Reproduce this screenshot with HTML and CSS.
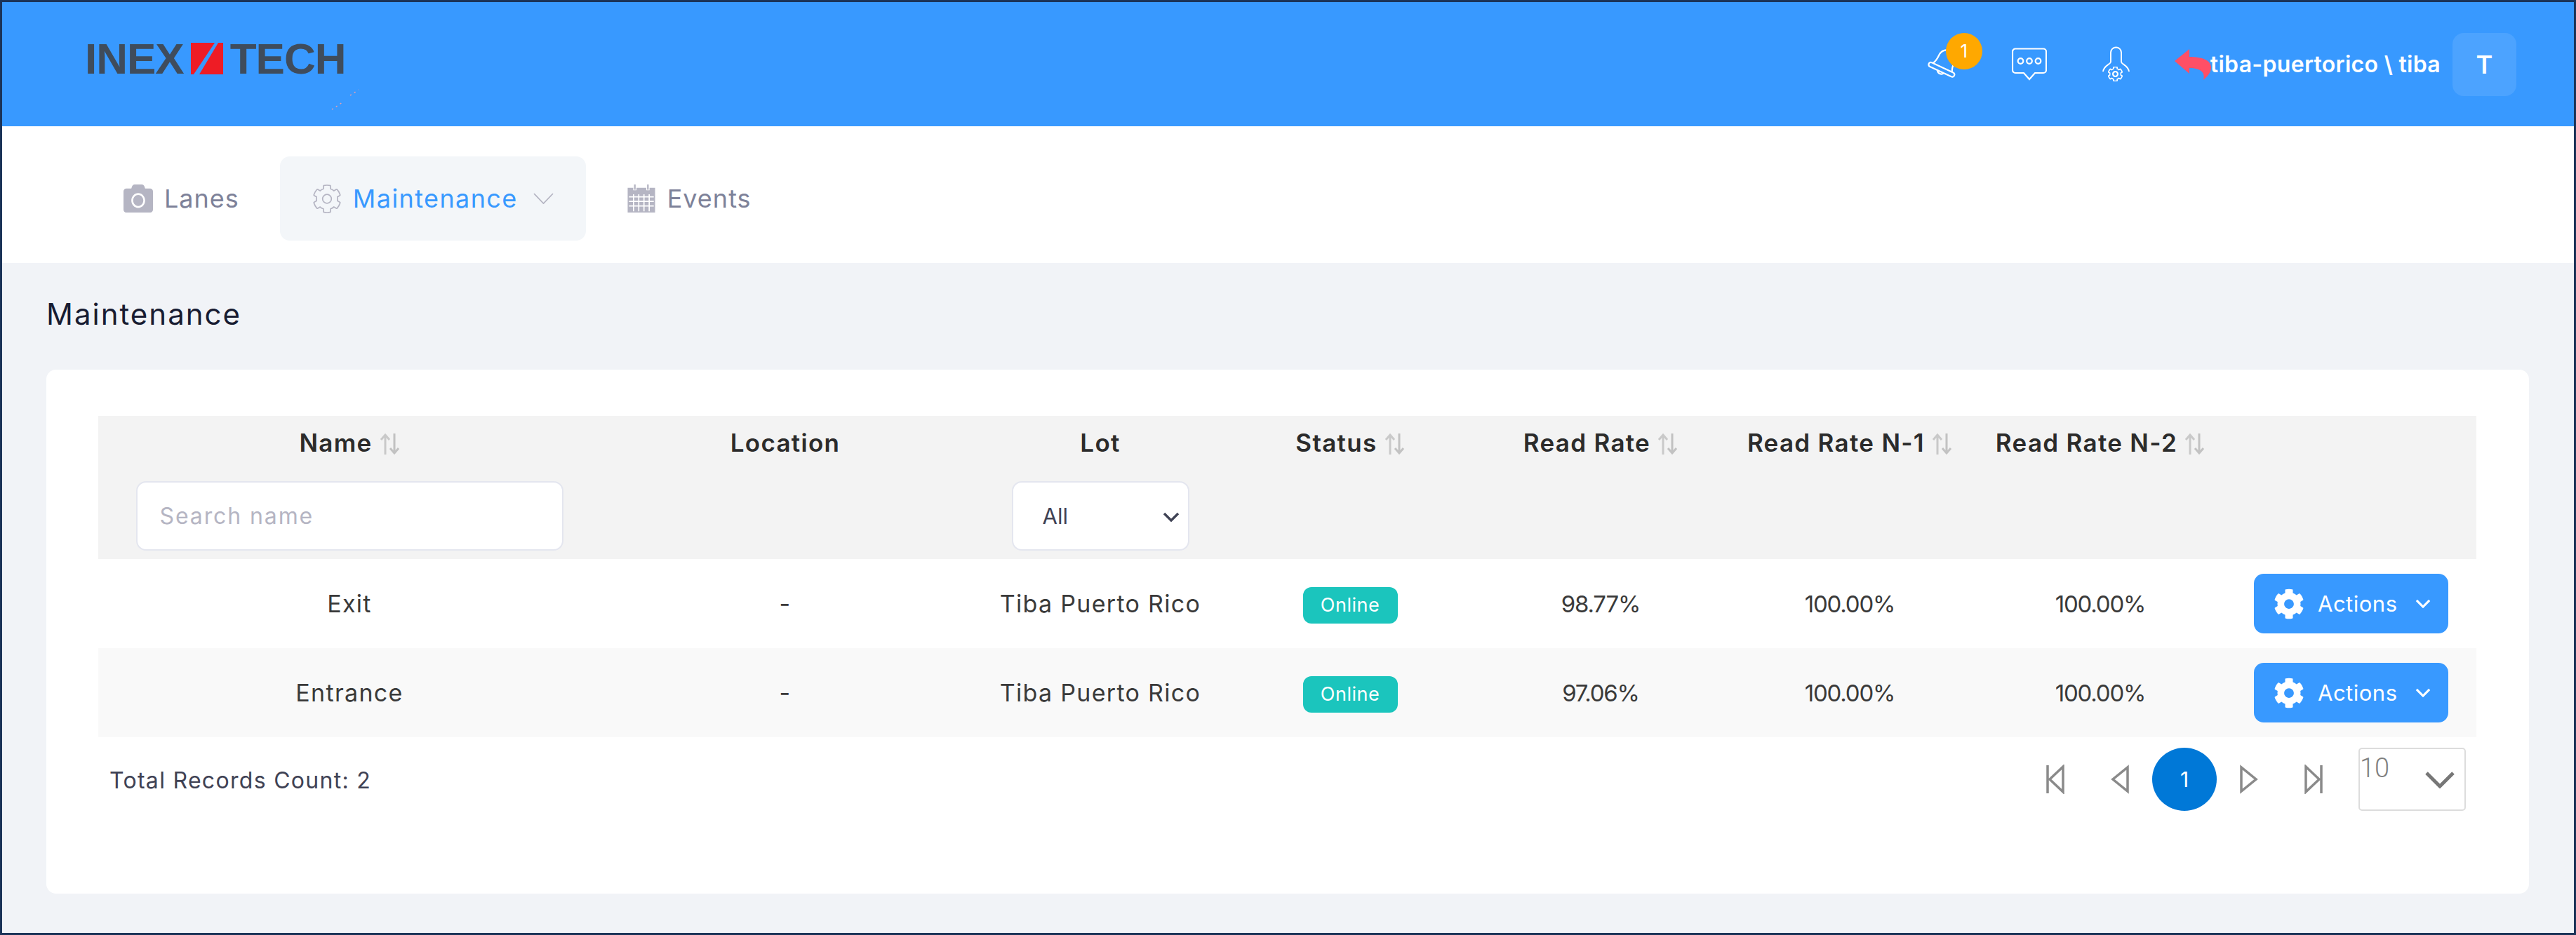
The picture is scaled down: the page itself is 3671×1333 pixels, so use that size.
FILE: index.html
```html
<!DOCTYPE html>
<html lang="en">
<head>
<meta charset="UTF-8">
<meta name="viewport" content="width=device-width, initial-scale=1.0">
<title>Maintenance</title>
<link rel="stylesheet" href="styles.css">
</head>
<body>
<svg class="sprite" xmlns="http://www.w3.org/2000/svg">
    <symbol id="cog" viewBox="0 0 512 512">
        <path d="M487.4 315.7l-42.6-24.6c4.3-23.2 4.3-47 0-70.2l42.6-24.6c4.9-2.8 7.1-8.6 5.5-14-11.1-35.6-30-67.8-54.7-94.6-3.8-4.1-10-5.1-14.8-2.3L380.8 110c-17.9-15.4-38.5-27.3-60.8-35.1V25.8c0-5.6-3.9-10.5-9.4-11.7-36.7-8.2-74.3-7.8-109.2 0-5.5 1.2-9.4 6.1-9.4 11.7V75c-22.2 7.9-42.8 19.8-60.8 35.1L88.7 85.5c-4.9-2.8-11-1.9-14.8 2.3-24.7 26.7-43.6 58.9-54.7 94.6-1.7 5.4.6 11.2 5.5 14L67.3 221c-4.3 23.2-4.3 47 0 70.2l-42.6 24.6c-4.9 2.8-7.1 8.6-5.5 14 11.1 35.6 30 67.8 54.7 94.6 3.8 4.1 10 5.1 14.8 2.3l42.6-24.6c17.9 15.4 38.5 27.3 60.8 35.1v49.2c0 5.6 3.9 10.5 9.4 11.7 36.7 8.2 74.3 7.8 109.2 0 5.5-1.2 9.4-6.1 9.4-11.7v-49.2c22.2-7.9 42.8-19.8 60.8-35.1l42.6 24.6c4.9 2.8 11 1.9 14.8-2.3 24.7-26.7 43.6-58.9 54.7-94.6 1.5-5.5-.7-11.3-5.6-14.1zM256 336c-44.1 0-80-35.9-80-80s35.9-80 80-80 80 35.9 80 80-35.9 80-80 80z"/>
    </symbol>
    <symbol id="sort" viewBox="0 0 29 30">
        <path d="M8 30V2M2 9l6-7 6 7" fill="none" stroke="#c9c9c9" stroke-width="3"/>
        <path d="M21 0v28M15 21l6 7 6-7" fill="none" stroke="#c2c2c2" stroke-width="3"/>
    </symbol>
    <symbol id="caret" viewBox="0 0 24 14">
        <path d="M2 2l10 10L22 2" fill="none" stroke="currentColor" stroke-width="3.4"/>
    </symbol>
</svg>

<div class="frame">
    <header class="topbar">
        <div class="logo">
            <span class="logo-word">INEX</span>
            <svg class="logo-mark" viewBox="0 0 46 45"><path d="M0 0h34L4 45H0z" fill="#ee1c25"/><path d="M39 0h7v45H12z" fill="#ee1c25"/></svg>
            <span class="logo-word">TECH</span>
            <svg class="logo-specks" viewBox="0 0 40 30"><path d="M1 29L16 19M27 9L39 1" fill="none" stroke="#e8a0b0" stroke-width="1.500" stroke-dasharray="2 5"/></svg>
        </div>
        <div class="topbar-right">
            <div class="bell">
                <svg class="icon-bell" viewBox="0 0 42 46" fill="none" stroke="#fff" stroke-width="2.2">
                    <g transform="rotate(25 21 30)">
                        <rect x="1" y="27" width="40" height="6.5" rx="3.2"/>
                        <path d="M6 27c3-5 3-10 3-14C9 6 14 1 21 1s12 5 12 12c0 4 0 9 3 14"/>
                        <path d="M16 33.5a5.500 5.500 0 0 0 10 0"/>
                    </g>
                </svg>
                <span class="bell-count">1</span>
            </div>
            <svg class="icon-chat" viewBox="0 0 50 47" fill="none" stroke="#fff" stroke-width="2.2">
                <path d="M5 1.500h40a4 4 0 0 1 4 4V32a4 4 0 0 1-4 4H33l-8 9-8-9H5a4 4 0 0 1-4-4V5.500a4 4 0 0 1 4-4z"/>
                <circle cx="12.500" cy="19" r="3.800"/>
                <circle cx="25" cy="19" r="3.800"/>
                <circle cx="37.500" cy="19" r="3.800"/>
            </svg>
            <svg class="icon-person" viewBox="0 0 39 51" fill="none" stroke="#fff" stroke-width="1.900">
                <path d="M12 22V9a7.500 7.500 0 0 1 15 0v13c0 4 10 5 11 14"/>
                <path d="M12 22c0 4-10 5-11 14"/>
                <use href="#cog" x="8" y="29" width="21" height="21" fill="none" stroke="#fff" stroke-width="40"/>
                <circle cx="18.500" cy="39.500" r="3.500"/>
            </svg>
            <svg class="icon-back" viewBox="0 0 52 44"><path d="M0 17L21 0v11c18 0 31 5 31 15 0 7-5 13-11 18 3-10-3-17-20-17v8z" fill="#ff4f66"/></svg>
            <span class="user-name">tiba-puertorico \ tiba</span>
            <span class="avatar">T</span>
        </div>
    </header>

    <nav class="tabs">
        <a class="tab">
            <svg class="tab-icon" viewBox="0 32 512 448" preserveAspectRatio="none"><path fill="#b5b5c3" d="M512 144v288c0 26.500-21.500 48-48 48H48c-26.500 0-48-21.500-48-48V144c0-26.500 21.500-48 48-48h88l12.300-32.900c7-18.700 24.900-31.100 44.900-31.100h125.500c20 0 37.900 12.400 44.900 31.100L376 96h88c26.500 0 48 21.500 48 48zM376 288c0-66.200-53.800-120-120-120s-120 53.800-120 120 53.800 120 120 120 120-53.800 120-120zm-32 0c0 48.500-39.500 88-88 88s-88-39.500-88-88 39.500-88 88-88 88 39.500 88 88z"/></svg>
            Lanes
        </a>
        <a class="tab tab-active">
            <svg class="tab-icon tab-gear" viewBox="-10 -10 532 532"><use href="#cog" width="512" height="512" fill="none" stroke="#b5b5c3" stroke-width="22"/></svg>
            Maintenance
            <svg class="tab-caret" viewBox="0 0 29 16"><path d="M1 1l13.500 14L28 1" fill="none" stroke="#b5b5c3" stroke-width="1.800"/></svg>
        </a>
        <a class="tab">
            <svg class="tab-icon" viewBox="0 0 42 43">
                <path d="M0 5h42v38H0z" fill="#b5b5c3"/>
                <path d="M11 0v9M31 0v9" stroke="#fff" stroke-width="5"/>
                <path d="M11 0v8M31 0v8" stroke="#b5b5c3" stroke-width="2.500"/>
                <path d="M2 19h38M2 26h38M2 33h38M9 15v26M17 15v26M25 15v26M33 15v26" stroke="#fff" stroke-width="1.800"/>
            </svg>
            Events
        </a>
    </nav>

    <main class="content">
        <h1 class="page-title">Maintenance</h1>
        <section class="card">
            <table class="grid">
                <colgroup>
                    <col class="col-name"><col class="col-location"><col class="col-lot"><col class="col-status">
                    <col class="col-rate"><col class="col-rate1"><col class="col-rate2"><col class="col-actions">
                </colgroup>
                <thead>
                    <tr class="head-labels">
                        <th>Name <svg class="sort"><use href="#sort"/></svg></th>
                        <th>Location</th>
                        <th>Lot</th>
                        <th>Status <svg class="sort"><use href="#sort"/></svg></th>
                        <th>Read Rate <svg class="sort"><use href="#sort"/></svg></th>
                        <th>Read Rate N-1 <svg class="sort"><use href="#sort"/></svg></th>
                        <th>Read Rate N-2 <svg class="sort"><use href="#sort"/></svg></th>
                        <th></th>
                    </tr>
                    <tr class="head-filters">
                        <th><input class="search" type="text" placeholder="Search name"></th>
                        <th></th>
                        <th>
                            <div class="lot-select">
                                <select><option>All</option></select>
                                <svg class="lot-caret"><use href="#caret"/></svg>
                            </div>
                        </th>
                        <th></th><th></th><th></th><th></th><th></th>
                    </tr>
                </thead>
                <tbody>
                    <tr>
                        <td>Exit</td>
                        <td>-</td>
                        <td>Tiba Puerto Rico</td>
                        <td><span class="badge">Online</span></td>
                        <td class="num">98.77%</td>
                        <td class="num">100.00%</td>
                        <td class="num">100.00%</td>
                        <td>
                            <button class="actions" type="button">
                                <svg class="actions-cog"><use href="#cog"/></svg>
                                Actions
                                <svg class="actions-caret"><use href="#caret"/></svg>
                            </button>
                        </td>
                    </tr>
                    <tr>
                        <td>Entrance</td>
                        <td>-</td>
                        <td>Tiba Puerto Rico</td>
                        <td><span class="badge">Online</span></td>
                        <td class="num">97.06%</td>
                        <td class="num">100.00%</td>
                        <td class="num">100.00%</td>
                        <td>
                            <button class="actions" type="button">
                                <svg class="actions-cog"><use href="#cog"/></svg>
                                Actions
                                <svg class="actions-caret"><use href="#caret"/></svg>
                            </button>
                        </td>
                    </tr>
                </tbody>
            </table>

            <div class="grid-footer">
                <span class="total">Total Records Count: 2</span>
                <div class="pager">
                    <span class="pager-btn"><svg class="pager-icon" viewBox="0 0 26 42"><path d="M2 1v40M24 3v36L5 21z"/></svg></span>
                    <span class="pager-btn"><svg class="pager-icon" viewBox="0 0 26 42"><path d="M24 4v34L3 21z"/></svg></span>
                    <span class="pager-current">1</span>
                    <span class="pager-btn"><svg class="pager-icon" viewBox="0 0 26 42"><path d="M2 4v34l21-17z"/></svg></span>
                    <span class="pager-btn"><svg class="pager-icon" viewBox="0 0 26 42"><path d="M24 1v40M2 3v36l19-18z"/></svg></span>
                    <div class="page-size">
                        <select><option>10</option></select>
                        <svg class="page-size-caret" viewBox="0 0 42 24"><path d="M2 2l19 19L40 2" fill="none" stroke="#777" stroke-width="5"/></svg>
                    </div>
                </div>
            </div>
        </section>
    </main>
</div>
</body>
</html>
```

FILE: styles.css
```css
body {
    margin: 0;
    padding: 0;
    font-family: Inter, "Open Sans", sans-serif;
    color: #3a3a3a;
}
.sprite {
    display: none;
}
.frame {
    display: flex;
    flex-direction: column;
    height: 1333px;
    box-sizing: border-box;
    border: 3px solid #1b3358;
    background-color: #f1f3f7;
}

/* top bar */
.topbar {
    display: flex;
    align-items: center;
    justify-content: space-between;
    height: 177px;
    padding: 0 82px 0 118px;
    background-color: #3899ff;
}
.logo {
    position: relative;
    display: flex;
    align-items: center;
    height: 45px;
    margin-top: -17px;
}
.logo-word {
    font-family: "Liberation Sans", sans-serif;
    font-size: 62px;
    font-weight: 700;
    letter-spacing: -1px;
    line-height: 45px;
    color: #3f4c5c;
}
.logo-mark {
    width: 46px;
    height: 45px;
    margin: 0 10px;
}
.logo-specks {
    position: absolute;
    top: 66px;
    left: 351px;
    width: 40px;
    height: 30px;
}
.topbar-right {
    display: flex;
    align-items: center;
}
.bell {
    position: relative;
    width: 42px;
    height: 46px;
}
.icon-bell {
    display: block;
    width: 42px;
    height: 46px;
}
.bell-count {
    position: absolute;
    top: -22px;
    left: 27px;
    width: 52px;
    height: 52px;
    border-radius: 50%;
    background-color: #ffa800;
    color: #fff;
    font-size: 26px;
    line-height: 52px;
    text-align: center;
}
.icon-chat {
    width: 50px;
    height: 47px;
    margin-left: 79px;
}
.icon-person {
    width: 39px;
    height: 51px;
    margin-left: 79px;
}
.icon-back {
    width: 52px;
    height: 44px;
    margin-left: 64px;
}
.user-name {
    margin-left: -1px;
    font-size: 32px;
    font-weight: 600;
    letter-spacing: .3px;
    color: #fff;
    white-space: nowrap;
}
.avatar {
    width: 91px;
    height: 90px;
    margin-left: 17px;
    border-radius: 16px;
    background-color: #4ca3ff;
    color: #fff;
    font-size: 36px;
    font-weight: 600;
    line-height: 90px;
    text-align: center;
}

/* nav tabs */
.tabs {
    display: flex;
    gap: 12px;
    height: 195px;
    box-sizing: border-box;
    padding: 43px 0 32px 127px;
    background-color: #fff;
}
.tab {
    display: flex;
    align-items: center;
    height: 120px;
    padding: 0 46px;
    border-radius: 14px;
    font-size: 36px;
    letter-spacing: 1px;
    color: #7e8299;
}
.tab-active {
    background-color: #f3f6f9;
    letter-spacing: 1.4px;
    color: #3899ff;
}
.tab-icon {
    width: 42px;
    height: 40px;
    margin-right: 16px;
}
.tab-gear {
    height: 43px;
}
.tab-caret {
    width: 29px;
    height: 16px;
    margin-left: 22px;
}

/* content */
.content {
    flex: 1;
    padding: 0 64px 0 63px;
}
.page-title {
    height: 109px;
    margin: 0;
    padding-top: 43px;
    font-size: 42px;
    font-weight: 400;
    letter-spacing: 2px;
    line-height: 60px;
    color: #181c32;
}
.card {
    padding: 66px 75px 118px 74px;
    border-radius: 14px;
    background-color: #fff;
}

/* table */
.grid {
    width: 3389px;
    border-collapse: collapse;
    table-layout: fixed;
}
.col-name { width: 716px; }
.col-location { width: 526px; }
.col-lot { width: 372px; }
.col-status { width: 340px; }
.col-rate { width: 374px; }
.col-rate1 { width: 336px; }
.col-rate2 { width: 378px; }
.col-actions { width: 347px; }
.grid thead {
    background-color: #f3f3f3;
}
.grid th {
    padding: 0;
    font-size: 35px;
    font-weight: 600;
    letter-spacing: 1.3px;
    color: #2b2b2b;
    white-space: nowrap;
}
.head-labels th {
    height: 89px;
    padding-bottom: 14px;
    box-sizing: border-box;
}
.head-filters th {
    height: 115px;
    padding-bottom: 8px;
    box-sizing: border-box;
}
.sort {
    width: 29px;
    height: 30px;
    vertical-align: -4px;
}
.search {
    display: block;
    width: 609px;
    height: 99px;
    box-sizing: border-box;
    margin: 0 auto;
    padding: 0 32px;
    border: 2px solid #e4e6ef;
    border-radius: 14px;
    font-family: inherit;
    font-size: 32px;
    letter-spacing: 1.9px;
}
.search::placeholder {
    color: #b5b5c3;
}
.lot-select {
    position: relative;
    width: 253px;
    margin: 0 auto;
}
.lot-select select {
    display: block;
    width: 100%;
    height: 99px;
    padding: 0 0 0 42px;
    border: 2px solid #e4e6ef;
    border-radius: 14px;
    background-color: #fff;
    font-family: inherit;
    font-size: 31px;
    color: #3f4254;
    appearance: none;
}
.lot-caret {
    position: absolute;
    top: 44px;
    right: 14px;
    width: 24px;
    height: 14px;
    color: #3f4254;
}
.grid td {
    height: 127px;
    padding: 0;
    font-size: 34px;
    letter-spacing: 1.3px;
    text-align: center;
    vertical-align: middle;
}
.grid td.num {
    font-size: 33px;
    letter-spacing: -1.2px;
}
.grid tbody tr:nth-child(even) {
    background-color: #f9f9f9;
}
.badge {
    display: inline-block;
    width: 135px;
    height: 52px;
    margin-top: 5px;
    border-radius: 12px;
    background-color: #1bc5bd;
    color: #fff;
    font-size: 27px;
    letter-spacing: .5px;
    line-height: 52px;
}
.actions {
    display: inline-flex;
    align-items: center;
    width: 277px;
    height: 85px;
    box-sizing: border-box;
    margin-right: 10px;
    padding: 0 0 0 28px;
    border: none;
    border-radius: 14px;
    background-color: #3899ff;
    color: #fff;
    font-family: inherit;
    font-size: 31px;
    letter-spacing: .5px;
    cursor: pointer;
}
.actions-cog {
    width: 44px;
    height: 44px;
    margin-right: 19px;
    fill: #fff;
}
.actions-caret {
    width: 22px;
    height: 13px;
    margin-left: 25px;
    color: #fff;
}

/* footer under the table */
.grid-footer {
    display: flex;
    align-items: center;
    justify-content: space-between;
    margin-top: 15px;
    padding: 0 15px 0 16px;
}
.total {
    padding-top: 2px;
    font-size: 32px;
    letter-spacing: 1.3px;
    color: #3f4254;
}
.pager {
    display: flex;
    align-items: center;
}
.pager-btn {
    display: flex;
    align-items: center;
    justify-content: center;
    width: 92px;
    height: 90px;
}
.pager-icon {
    width: 26px;
    height: 42px;
    fill: none;
    stroke: #8a8a8a;
    stroke-width: 3.5;
}
.pager-current {
    width: 92px;
    height: 90px;
    border-radius: 50%;
    background-color: #0078d7;
    color: #fff;
    font-size: 30px;
    line-height: 90px;
    text-align: center;
}
.page-size {
    position: relative;
    width: 153px;
    margin-left: 18px;
}
.page-size select {
    display: block;
    width: 100%;
    height: 90px;
    padding: 0 0 32px 0;
    border: 2px solid #dcdcdc;
    border-radius: 5px;
    background-color: #fff;
    font-family: Roboto, sans-serif;
    font-size: 38px;
    font-weight: 300;
    color: #808080;
    appearance: none;
}
.page-size-caret {
    position: absolute;
    top: 34px;
    right: 16px;
    width: 42px;
    height: 24px;
}
```
